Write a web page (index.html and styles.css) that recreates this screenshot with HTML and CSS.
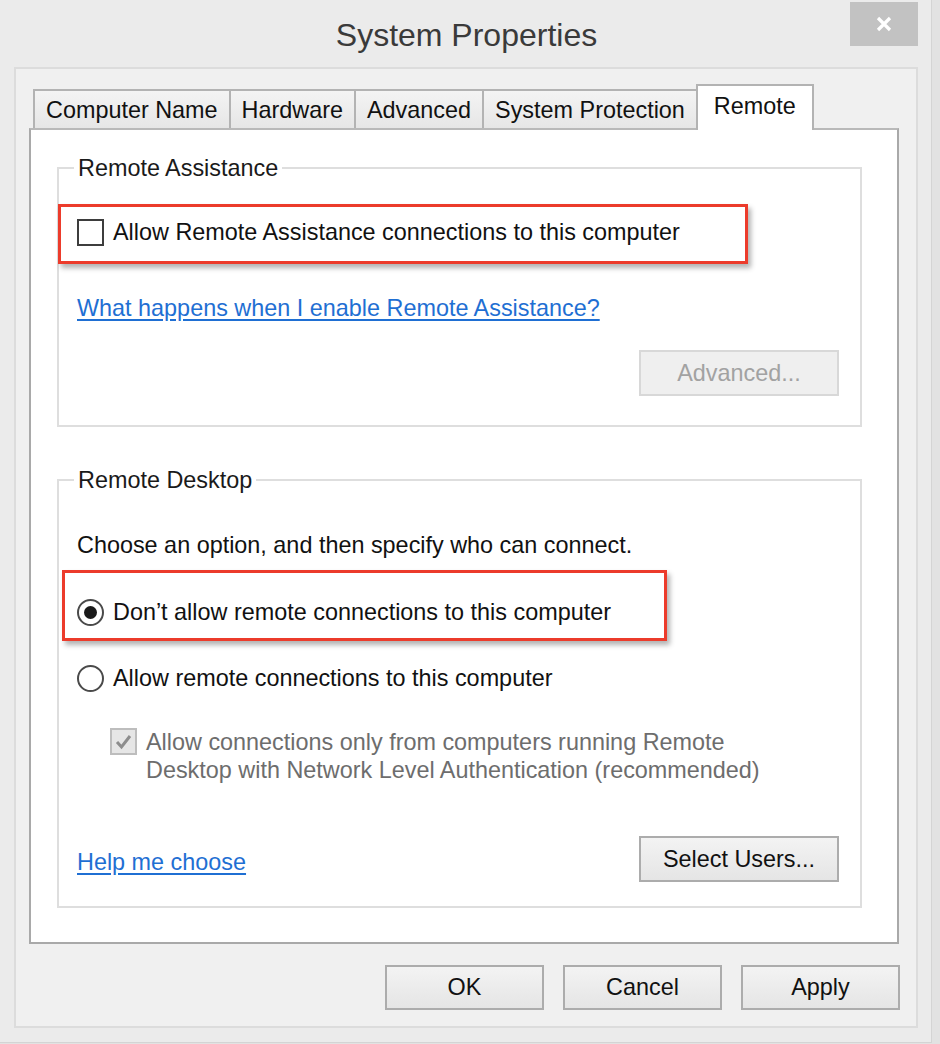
FILE: index.html
```html
<!DOCTYPE html>
<html lang="en">
<head>
<meta charset="utf-8">
<title>System Properties</title>
<link rel="stylesheet" href="styles.css">
</head>
<body>
<div class="window">
  <div class="titlebar">
    <div class="title">System Properties</div>
    <div class="close">
      <svg width="20" height="18" viewBox="0 0 20 18"><path d="M4 3 L16 15 M16 3 L4 15" stroke="#fff" stroke-width="3.2" fill="none"/></svg>
    </div>
  </div>
  <div class="client">
    <div class="tabs">
      <div class="tab">Computer Name</div>
      <div class="tab">Hardware</div>
      <div class="tab">Advanced</div>
      <div class="tab">System Protection</div>
      <div class="tab active">Remote</div>
    </div>
    <div class="panel">
      <fieldset class="group group-assist">
        <legend>Remote Assistance</legend>
        <div class="row check-row">
          <span class="checkbox"></span>
          <span>Allow Remote Assistance connections to this computer</span>
        </div>
        <div class="row link-row"><a class="link" href="#">What happens when I enable Remote Assistance?</a></div>
        <div class="btn-row">
          <button class="btn btn-wide" disabled>Advanced...</button>
        </div>
      </fieldset>
      <fieldset class="group group-desktop">
        <legend>Remote Desktop</legend>
        <div class="row intro">Choose an option, and then specify who can connect.</div>
        <div class="row radio-row first">
          <span class="radio checked"></span>
          <span>Don’t allow remote connections to this computer</span>
        </div>
        <div class="row radio-row">
          <span class="radio"></span>
          <span>Allow remote connections to this computer</span>
        </div>
        <div class="nla">
          <span class="checkbox disabled">
            <svg width="23" height="23" viewBox="0 0 23 23"><path d="M5 12 L9.5 17 L18 6" stroke="#8d8d8d" stroke-width="3" fill="none"/></svg>
          </span>
          <span class="nla-text">Allow connections only from computers running Remote<br>Desktop with Network Level Authentication (recommended)</span>
        </div>
        <div class="bottom-row">
          <a class="link" href="#">Help me choose</a>
          <button class="btn btn-wide">Select Users...</button>
        </div>
      </fieldset>
    </div>
    <div class="footer">
      <button class="btn btn-foot">OK</button>
      <button class="btn btn-foot">Cancel</button>
      <button class="btn btn-foot">Apply</button>
    </div>
  </div>
  <div class="callout callout-assist"></div>
  <div class="callout callout-desktop"></div>
</div>
</body>
</html>
```
FILE: styles.css
```css
* { box-sizing: border-box; }
body {
  margin: 0;
  background: #e2e2e2;
  font-family: "Liberation Sans", Arial, sans-serif;
  color: #111;
}
.window {
  position: relative;
  width: 932px;
  height: 1043px;
  background: #ebebeb;
  border-right: 1px solid #d4d4d4;
  border-bottom: 1px solid #d4d4d4;
}
.titlebar {
  height: 67px;
  display: grid;
  grid-template-columns: 1fr auto 1fr;
  align-items: start;
}
.title {
  grid-column: 2;
  font-size: 32px;
  line-height: 70px;
  color: #3a3a3a;
  padding-left: 2px;
}
.close {
  grid-column: 3;
  justify-self: end;
  margin: 2px 13px 0 0;
  width: 68px;
  height: 44px;
  background: #c2c2c2;
  display: flex;
  align-items: center;
  justify-content: center;
}
.client {
  margin-left: 14px;
  width: 904px;
  height: 961px;
  border: 2px solid #dcdcdc;
  background: #f0f0f0;
  padding: 15px 17px 0 13px;
  font-size: 23.4px;
}
.tabs {
  display: flex;
  align-items: flex-end;
  height: 44px;
  padding-left: 4px;
}
.tab {
  height: 39px;
  border: 2px solid #b3b3b3;
  border-bottom: none;
  margin-left: -2px;
  padding: 0 11px;
  line-height: 38px;
  background: linear-gradient(#f4f4f4, #e6e6e6);
  white-space: nowrap;
}
.tab:first-child { margin-left: 0; }
.tab.active {
  height: 46px;
  margin-bottom: -2px;
  background: #fff;
  position: relative;
  z-index: 1;
  line-height: 40px;
  padding: 0 16px;
}
.panel {
  height: 816px;
  background: #fff;
  border: 2px solid #a9a9a9;
  border-top-color: #b9b9b9;
  padding: 23px 35px 0 26px;
}
.group {
  margin: 0;
  border: 2px solid #dedede;
  padding: 0 21px 0 18px;
  min-width: 0;
}
.group legend {
  padding: 0 4px;
  margin-left: -3px;
  line-height: 30px;
  color: #1a1a1a;
}
.group-assist { padding-bottom: 29px; }
.group-desktop { margin-top: 38px; padding-bottom: 24px; }
.row {
  display: flex;
  align-items: center;
  gap: 9px;
  height: 30px;
  line-height: 30px;
  white-space: nowrap;
}
.check-row { margin-top: 34px; }
.link-row { margin-top: 46px; }
.link {
  color: #1f6fd3;
  text-decoration: underline;
  text-underline-offset: 3px;
}
.btn-row {
  display: flex;
  justify-content: flex-end;
  margin-top: 27px;
}
.btn {
  font-family: inherit;
  font-size: 23.4px;
  color: #111;
  border: 2px solid #acacac;
  background: linear-gradient(#f3f3f3, #e5e5e5);
  padding: 0;
}
.btn-wide { width: 200px; height: 46px; }
.btn:disabled {
  color: #a2a2a2;
  border-color: #d8d8d8;
  background: #efefef;
}
.intro { margin-top: 35px; }
.radio-row.first { margin-top: 37px; }
.radio-row { margin-top: 36px; }
.checkbox {
  width: 27px;
  height: 27px;
  border: 2px solid #3d3d3d;
  background: #fff;
  flex: none;
  display: flex;
  align-items: center;
  justify-content: center;
}
.checkbox.disabled {
  border-color: #bdbdbd;
  background: #e6e6e6;
}
.radio {
  width: 27px;
  height: 27px;
  border: 2px solid #4a4a4a;
  border-radius: 50%;
  background: #fff;
  flex: none;
  display: flex;
  align-items: center;
  justify-content: center;
}
.radio.checked::after {
  content: "";
  width: 13px;
  height: 13px;
  border-radius: 50%;
  background: #1a1a1a;
}
.nla {
  display: flex;
  align-items: flex-start;
  gap: 9px;
  margin-top: 35px;
  padding-left: 33px;
}
.nla-text {
  line-height: 28px;
  color: #6d6d6d;
  white-space: nowrap;
}
.bottom-row {
  display: flex;
  justify-content: space-between;
  align-items: center;
  margin-top: 52px;
}
.bottom-row .link { margin-top: 6px; }
.footer {
  display: flex;
  justify-content: flex-end;
  gap: 19px;
  margin-top: 21px;
  margin-right: -1px;
}
.btn-foot { width: 159px; height: 45px; }
.callout {
  position: absolute;
  border: 3px solid #ec3b2b;
  box-shadow: 3px 4px 5px rgba(0, 0, 0, 0.3);
}
.callout-assist { left: 58px; top: 204px; width: 690px; height: 60px; }
.callout-desktop { left: 62px; top: 570px; width: 605px; height: 71px; }
```
